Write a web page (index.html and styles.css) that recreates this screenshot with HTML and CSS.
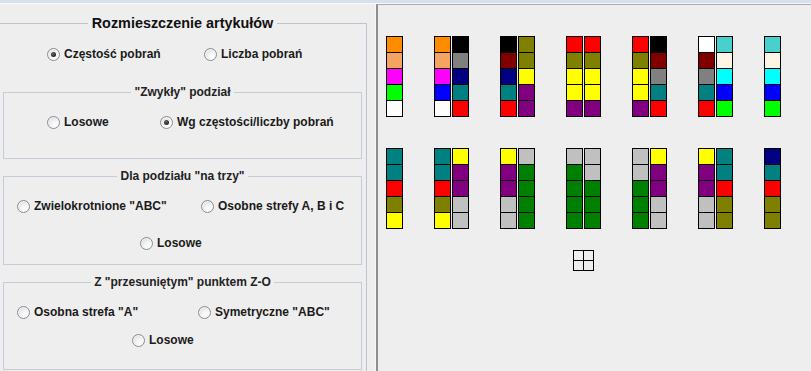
FILE: index.html
```html
<!DOCTYPE html>
<html lang="pl">
<head>
<meta charset="utf-8">
<title>Rozmieszczenie artykułów</title>
<link rel="stylesheet" href="styles.css">
</head>
<body>
<div class="topbar"></div>
<div class="main">
  <div class="left">
    <div class="outer">
      <div class="outer-title">Rozmieszczenie artykułów</div>
      <div class="row row-main">
        <label class="opt"><span class="radio checked"></span>Częstość pobrań</label>
        <label class="opt"><span class="radio"></span>Liczba pobrań</label>
      </div>

      <div class="group g1">
        <div class="group-title">"Zwykły" podział</div>
        <div class="row r1">
          <label class="opt"><span class="radio"></span>Losowe</label>
          <label class="opt"><span class="radio checked"></span>Wg częstości/liczby pobrań</label>
        </div>
      </div>

      <div class="group g2">
        <div class="group-title">Dla podziału "na trzy"</div>
        <div class="row r1">
          <label class="opt"><span class="radio"></span>Zwielokrotnione "ABC"</label>
          <label class="opt"><span class="radio"></span>Osobne strefy A, B i C</label>
        </div>
        <div class="row r2">
          <label class="opt"><span class="radio"></span>Losowe</label>
        </div>
      </div>

      <div class="group g3">
        <div class="group-title">Z "przesuniętym" punktem Z-O</div>
        <div class="row r1">
          <label class="opt"><span class="radio"></span>Osobna strefa "A"</label>
          <label class="opt"><span class="radio"></span>Symetryczne "ABC"</label>
        </div>
        <div class="row r2">
          <label class="opt"><span class="radio"></span>Losowe</label>
        </div>
      </div>
    </div>
  </div>

  <div class="right">
    <div class="bars">
      <div class="bar-row">
        <div class="stack">
          <div class="col"><i class="or"></i><i class="sb"></i><i class="mg"></i><i class="lm"></i><i class="wh"></i></div>
        </div>
        <div class="stack">
          <div class="col"><i class="or"></i><i class="sb"></i><i class="mg"></i><i class="bl"></i><i class="wh"></i></div>
          <div class="col"><i class="bk"></i><i class="gy"></i><i class="nv"></i><i class="tl"></i><i class="rd"></i></div>
        </div>
        <div class="stack">
          <div class="col"><i class="bk"></i><i class="mr"></i><i class="nv"></i><i class="tl"></i><i class="rd"></i></div>
          <div class="col"><i class="ol"></i><i class="ol"></i><i class="yl"></i><i class="pu"></i><i class="pu"></i></div>
        </div>
        <div class="stack">
          <div class="col"><i class="rd"></i><i class="ol"></i><i class="yl"></i><i class="yl"></i><i class="pu"></i></div>
          <div class="col"><i class="rd"></i><i class="ol"></i><i class="yl"></i><i class="yl"></i><i class="pu"></i></div>
        </div>
        <div class="stack">
          <div class="col"><i class="rd"></i><i class="ol"></i><i class="yl"></i><i class="yl"></i><i class="pu"></i></div>
          <div class="col"><i class="bk"></i><i class="mr"></i><i class="gy"></i><i class="tl"></i><i class="rd"></i></div>
        </div>
        <div class="stack">
          <div class="col"><i class="wh"></i><i class="mr"></i><i class="gy"></i><i class="tl"></i><i class="rd"></i></div>
          <div class="col"><i class="tq"></i><i class="ln"></i><i class="cy"></i><i class="bl"></i><i class="lm"></i></div>
        </div>
        <div class="stack">
          <div class="col"><i class="tq"></i><i class="ln"></i><i class="cy"></i><i class="bl"></i><i class="lm"></i></div>
        </div>
      </div>

      <div class="bar-row">
        <div class="stack">
          <div class="col"><i class="tl"></i><i class="tl"></i><i class="rd"></i><i class="ol"></i><i class="yl"></i></div>
        </div>
        <div class="stack">
          <div class="col"><i class="tl"></i><i class="tl"></i><i class="rd"></i><i class="ol"></i><i class="yl"></i></div>
          <div class="col"><i class="yl"></i><i class="pu"></i><i class="pu"></i><i class="sv"></i><i class="sv"></i></div>
        </div>
        <div class="stack">
          <div class="col"><i class="yl"></i><i class="pu"></i><i class="pu"></i><i class="sv"></i><i class="sv"></i></div>
          <div class="col"><i class="sv"></i><i class="gr"></i><i class="gr"></i><i class="gr"></i><i class="gr"></i></div>
        </div>
        <div class="stack">
          <div class="col"><i class="sv"></i><i class="gr"></i><i class="gr"></i><i class="gr"></i><i class="gr"></i></div>
          <div class="col"><i class="sv"></i><i class="sv"></i><i class="gr"></i><i class="gr"></i><i class="gr"></i></div>
        </div>
        <div class="stack">
          <div class="col"><i class="sv"></i><i class="sv"></i><i class="gr"></i><i class="gr"></i><i class="gr"></i></div>
          <div class="col"><i class="yl"></i><i class="pu"></i><i class="pu"></i><i class="sv"></i><i class="sv"></i></div>
        </div>
        <div class="stack">
          <div class="col"><i class="yl"></i><i class="pu"></i><i class="pu"></i><i class="sv"></i><i class="sv"></i></div>
          <div class="col"><i class="tl"></i><i class="tl"></i><i class="rd"></i><i class="ol"></i><i class="ol"></i></div>
        </div>
        <div class="stack">
          <div class="col"><i class="nv"></i><i class="tl"></i><i class="rd"></i><i class="ol"></i><i class="ol"></i></div>
        </div>
      </div>

      <svg class="grid-icon" width="21" height="21" viewBox="0 0 21 21" aria-hidden="true">
        <rect x="0.5" y="0.5" width="20" height="20" fill="none" stroke="#000" stroke-width="1"/>
        <line x1="10.5" y1="0" x2="10.5" y2="21" stroke="#000" stroke-width="1"/>
        <line x1="0" y1="10.5" x2="21" y2="10.5" stroke="#000" stroke-width="1"/>
      </svg>
    </div>
  </div>
</div>
</body>
</html>
```

FILE: styles.css
```css
html, body {
  margin: 0;
  padding: 0;
}
body {
  width: 811px;
  height: 371px;
  overflow: hidden;
  background: #eeeeee;
  font-family: "Liberation Sans", Arial, sans-serif;
  font-size: 12px;
  font-weight: bold;
  color: #1a1a1a;
}

.topbar {
  height: 3px;
  background: #d8e1eb;
  border-bottom: 1px solid #f6f8fa;
}

.main {
  display: flex;
  height: 367px;
}

/* ---------- left panel ---------- */
.left {
  width: 376px;
  flex: none;
  overflow: hidden;
  box-sizing: border-box;
  border-right: 1px solid #f7f7f7;
}

.outer {
  box-sizing: border-box;
  width: 370px;
  height: 420px;
  margin: 19px 0 0 -3px;
  padding: 0 4px 0 5px;
  border: 1px solid #bcc5cf;
}

.outer-title {
  width: fit-content;
  margin: -9px auto 0;
  padding: 0 4px;
  line-height: 17px;
  font-size: 14.4px;
  font-weight: bold;
  color: #111;
  background: #eeeeee;
}

.group {
  box-sizing: border-box;
  border: 1px solid #c3cdd8;
  margin-top: 17px;
}
.group.g1 { margin-top: 28px; height: 67px; }
.group.g2 { height: 89px; }
.group.g3 { height: 88px; }

.group-title {
  width: fit-content;
  margin: -8px auto 0;
  padding: 0 3px;
  line-height: 15px;
  background: #eeeeee;
  color: #222;
}

.row {
  display: grid;
  height: 20px;
  align-items: center;
  margin-top: 12px;
}
.row-main { padding-left: 44px; grid-template-columns: 157px auto; }
.g1 .r1 { padding-left: 43px; grid-template-columns: 113px auto; }
.g2 .r1 { padding-left: 13px; grid-template-columns: 184px auto; }
.g2 .r2 { padding-left: 136px; margin-top: 17px; }
.g3 .r1 { padding-left: 13px; grid-template-columns: 181px auto; }
.g3 .r2 { padding-left: 128px; margin-top: 8px; }

.opt {
  display: flex;
  align-items: center;
  white-space: nowrap;
}

.radio {
  position: relative;
  flex: none;
  box-sizing: border-box;
  width: 13px;
  height: 13px;
  margin-right: 4px;
  border-radius: 50%;
  border: 1px solid #8a8c90;
  background: radial-gradient(circle at 65% 70%, #ffffff 0%, #f3f4f6 35%, #d9dbde 85%, #cfd2d6 100%);
  box-shadow: inset 0 0 0 1px rgba(255,255,255,0.6);
}
.radio.checked::after {
  content: "";
  position: absolute;
  left: 3px;
  top: 3px;
  width: 5px;
  height: 5px;
  border-radius: 50%;
  background: radial-gradient(circle at 40% 35%, #6a6a6a 0%, #2a2a2a 60%, #111 100%);
}

/* ---------- right panel ---------- */
.right {
  flex: 1;
  box-sizing: border-box;
  border-top: 1px solid #a6adb6;
  border-left: 2px solid #8d8f93;
  padding: 31px 0 0 8px;
  background: #eeeeee;
}

.bars {
  display: flex;
  flex-direction: column;
  width: fit-content;
}
.bar-row {
  display: flex;
  gap: 31px;
}
.bar-row + .bar-row { margin-top: 31px; }

.stack {
  display: flex;
  gap: 1px;
}
.col {
  display: flex;
  flex-direction: column;
}
.col i {
  display: block;
  box-sizing: border-box;
  width: 17px;
  height: 17px;
  border: 1px solid #000;
}
.col i + i { margin-top: -1px; }

.grid-icon {
  display: block;
  margin: 21px auto 0;
}

/* palette */
.or { background: #ff8c00; }
.sb { background: #f4a460; }
.mg { background: #ff00ff; }
.lm { background: #00ff00; }
.wh { background: #ffffff; }
.bk { background: #000000; }
.gy { background: #808080; }
.nv { background: #000080; }
.tl { background: #008080; }
.rd { background: #ff0000; }
.mr { background: #800000; }
.ol { background: #808000; }
.yl { background: #ffff00; }
.pu { background: #800080; }
.tq { background: #48d1cc; }
.ln { background: #fdf5e6; }
.cy { background: #00ffff; }
.bl { background: #0000ff; }
.sv { background: #c0c0c0; }
.gr { background: #008000; }
```
